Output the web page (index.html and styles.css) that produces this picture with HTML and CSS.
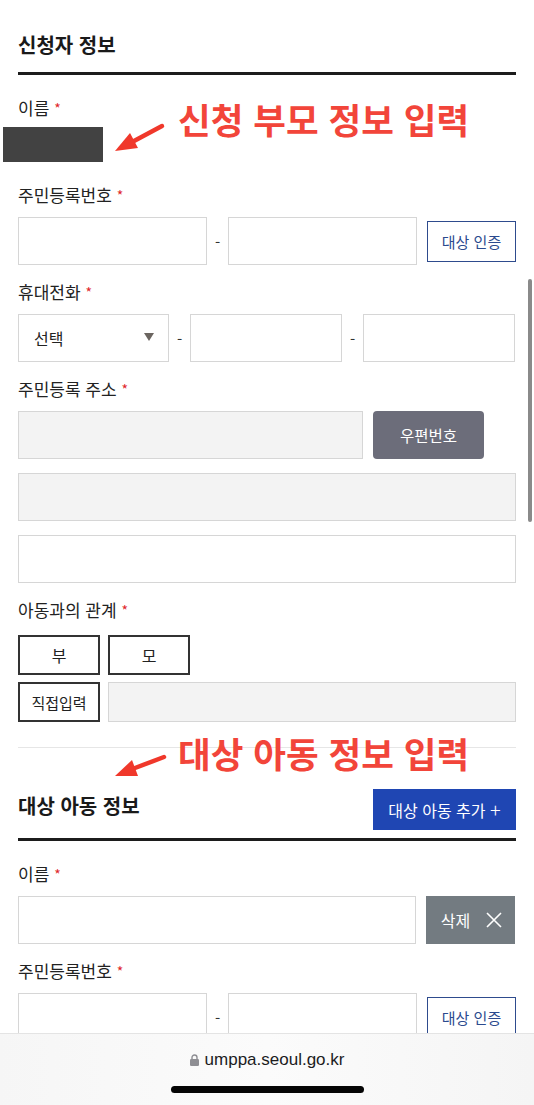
FILE: index.html
```html
<!DOCTYPE html>
<html lang="ko">
<head>
<meta charset="utf-8">
<title>신청자 정보</title>
<link rel="stylesheet" href="styles.css">
</head>
<body>
<div class="page">
  <div class="sec-head sec-head--first">
    <h2 class="sec-title">신청자 정보</h2>
  </div>

  <div class="field field--first">
    <div class="label">이름<span class="req">*</span></div>
    <div class="redact"></div>
  </div>

  <div class="field field--wide">
    <div class="label">주민등록번호<span class="req">*</span></div>
    <div class="row">
      <div class="input input--rrn"></div>
      <span class="dash">-</span>
      <div class="input input--rrn"></div>
      <button class="btn-outline">대상 인증</button>
    </div>
  </div>

  <div class="field">
    <div class="label">휴대전화<span class="req">*</span></div>
    <div class="row">
      <div class="input select"><span>선택</span><span class="caret"></span></div>
      <span class="dash">-</span>
      <div class="input input--phone"></div>
      <span class="dash">-</span>
      <div class="input input--phone"></div>
    </div>
  </div>

  <div class="field">
    <div class="label">주민등록 주소<span class="req">*</span></div>
    <div class="row">
      <div class="input input--gray input--zip"></div>
      <button class="btn-zip">우편번호</button>
    </div>
    <div class="input input--gray input--full stack"></div>
    <div class="input input--full stack"></div>
  </div>

  <div class="field">
    <div class="label">아동과의 관계<span class="req">*</span></div>
    <div class="rel-grid">
      <button class="btn-box">부</button>
      <button class="btn-box">모</button>
      <span></span>
      <button class="btn-box btn-box--sm">직접입력</button>
      <div class="input input--gray rel-input"></div>
    </div>
  </div>

  <hr class="sep">

  <div class="sec-head sec-head--second">
    <h2 class="sec-title sec-title--up">대상 아동 정보</h2>
    <button class="btn-add">대상 아동 추가 <span class="plus">+</span></button>
  </div>

  <div class="field field--first">
    <div class="label">이름<span class="req">*</span></div>
    <div class="row">
      <div class="input input--name"></div>
      <button class="btn-del">삭제
        <svg class="x-icon" width="16" height="16" viewBox="0 0 16 16"><path d="M1 1L15 15M15 1L1 15" stroke="#fff" stroke-width="1.6" fill="none"/></svg>
      </button>
    </div>
  </div>

  <div class="field">
    <div class="label">주민등록번호<span class="req">*</span></div>
    <div class="row row--last">
      <div class="input input--rrn"></div>
      <span class="dash">-</span>
      <div class="input input--rrn"></div>
      <button class="btn-outline">대상 인증</button>
    </div>
  </div>
</div>

<div class="note note--one">신청 부모 정보 입력</div>
<div class="note note--two">대상 아동 정보 입력</div>

<svg class="arrows" width="534" height="1105" viewBox="0 0 534 1105">
  <line x1="162" y1="126" x2="134" y2="141" stroke="#f0382b" stroke-width="4.5" stroke-linecap="round"/>
  <polygon points="115,151 138,148 130,133" fill="#f0382b"/>
  <line x1="164" y1="757" x2="135" y2="768" stroke="#f0382b" stroke-width="4.5" stroke-linecap="round"/>
  <polygon points="115,776 138,776 132,760" fill="#f0382b"/>
</svg>

<div class="scrollbar"></div>

<div class="browser-bar">
  <div class="url">
    <svg class="lock" width="9" height="12" viewBox="0 0 9 12"><path d="M2 5V3.5a2.5 2.5 0 0 1 5 0V5" stroke="#8e8e93" stroke-width="1.4" fill="none"/><rect x="0" y="5" width="9" height="7" rx="1.3" fill="#8e8e93"/></svg>
    <span>umppa.seoul.go.kr</span>
  </div>
  <div class="home-bar"></div>
</div>
</body>
</html>
```

FILE: styles.css
```css
* {
  box-sizing: border-box;
  margin: 0;
  padding: 0;
}

html,
body {
  width: 534px;
  height: 1105px;
  overflow: hidden;
  background: #fff;
}

body {
  position: relative;
  font-family: "Noto Sans CJK KR", "Noto Sans", sans-serif;
  color: #222;
}

button {
  font-family: inherit;
  cursor: pointer;
}

.page {
  padding: 0 18px;
}

.sec-head {
  display: flex;
  justify-content: space-between;
  border-bottom: 3px solid #1c1c1c;
}

.sec-head--first {
  height: 75px;
  padding-top: 30px;
  align-items: flex-start;
}

.sec-head--second {
  padding-top: 41px;
  padding-bottom: 8px;
  align-items: center;
}

.sec-title {
  font-size: 20px;
  line-height: 30px;
  font-weight: 700;
  color: #1a1a1a;
}

.sec-title--up {
  margin-bottom: 8px;
}

.field {
  margin-top: 15px;
}

.field--first,
.field--wide {
  margin-top: 21px;
}

.label {
  height: 24px;
  font-size: 17px;
  line-height: 24px;
  color: #222;
  margin-bottom: 10px;
  overflow: visible;
}

.req {
  color: #e0262b;
  font-size: 14px;
  line-height: 0;
  margin-left: 5px;
  position: relative;
  top: -1px;
}

.redact {
  width: 100px;
  height: 35px;
  margin-left: -15px;
  margin-top: -3px;
  background: #424242;
}

.row {
  display: flex;
  align-items: center;
  height: 48px;
}

.input {
  height: 48px;
  border: 1px solid #d6d6d6;
  background: #fff;
}

.input--gray {
  background: #f3f3f3;
}

.input--rrn {
  width: 189px;
}

.input--phone {
  width: 152px;
}

.input--zip {
  width: 345px;
}

.input--full {
  width: 498px;
}

.input--name {
  width: 398px;
}

.stack {
  margin-top: 14px;
}

.dash {
  width: 21px;
  text-align: center;
  font-size: 15px;
  color: #333;
}

.select {
  width: 151px;
  display: flex;
  align-items: center;
  justify-content: space-between;
  padding: 0 14px 0 15px;
  font-size: 16px;
  color: #222;
}

.caret {
  width: 0;
  height: 0;
  margin-top: -2px;
  border-left: 5.5px solid transparent;
  border-right: 5.5px solid transparent;
  border-top: 8px solid #6b6560;
}

.btn-outline {
  margin-left: 10px;
  width: 89px;
  height: 41px;
  border: 1.5px solid #2e4b8d;
  background: #fff;
  color: #2b4a8e;
  font-size: 15px;
}

.btn-zip {
  margin-left: 10px;
  width: 111px;
  height: 48px;
  border: none;
  border-radius: 4px;
  background: #6c6d7a;
  color: #fff;
  font-size: 15.5px;
}

.rel-grid {
  display: grid;
  grid-template-columns: 82px 82px 1fr;
  grid-template-rows: 40px 40px;
  column-gap: 8px;
  row-gap: 7px;
  margin-top: 13px;
}

.btn-box {
  border: 2px solid #333;
  background: #fff;
  color: #222;
  font-size: 16px;
}

.btn-box--sm {
  font-size: 15px;
}

.rel-input {
  grid-column: 2 / 4;
  height: 40px;
}

.sep {
  border: none;
  border-top: 1px solid #e6e6e6;
  margin-top: 25px;
}

.btn-add {
  width: 143px;
  height: 41px;
  border: none;
  background: #1f46b3;
  color: #fff;
  font-size: 16px;
}

.plus {
  font-size: 20px;
  font-weight: 300;
  line-height: 0;
  position: relative;
  top: 1px;
}

.btn-del {
  margin-left: 10px;
  width: 89px;
  height: 48px;
  border: none;
  background: #737b81;
  color: #fff;
  font-size: 16px;
  display: flex;
  align-items: center;
  justify-content: center;
  gap: 16px;
  padding-left: 2px;
}

.x-icon {
  display: block;
}

.row--last {
  margin-top: 1px;
}

.note {
  position: absolute;
  left: 178px;
  font-size: 35.5px;
  line-height: 44px;
  font-weight: 700;
  color: #f2453a;
  white-space: nowrap;
}

.note--one {
  top: 97px;
}

.note--two {
  top: 731px;
}

.arrows {
  position: absolute;
  left: 0;
  top: 0;
  pointer-events: none;
}

.scrollbar {
  position: absolute;
  left: 528px;
  top: 279px;
  width: 4px;
  height: 243px;
  border-radius: 2px;
  background: #8a8a8a;
}

.browser-bar {
  position: absolute;
  left: 0;
  right: 0;
  bottom: 0;
  height: 72px;
  border-top: 1px solid #e4e4e4;
  background: linear-gradient(90deg, #f6f6f6, #fbfbfb 50%, #f5f5f5);
  display: flex;
  flex-direction: column;
  align-items: center;
}

.url {
  display: flex;
  align-items: center;
  gap: 6px;
  margin-top: 15px;
  font-family: "Liberation Sans", Arial, sans-serif;
  font-size: 17px;
  line-height: 22px;
  color: #1c1c1e;
}

.lock {
  display: block;
  margin-top: -1px;
}

.home-bar {
  margin-top: 15px;
  width: 193px;
  height: 7px;
  border-radius: 4px;
  background: #050505;
}
```
